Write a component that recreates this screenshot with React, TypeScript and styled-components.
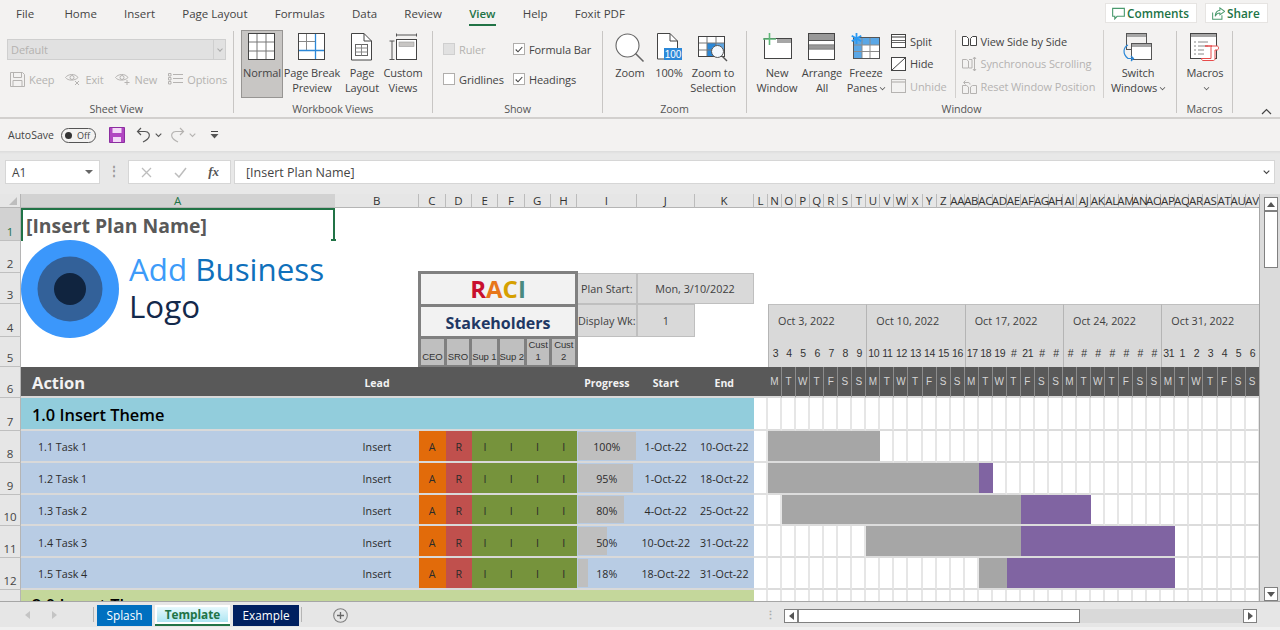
import React from 'react';
import styled, { createGlobalStyle, css } from 'styled-components';

const UI = '"Open Sans", "Noto Sans", "Liberation Sans", sans-serif';

const GlobalStyle = createGlobalStyle`
  html, body {
    margin: 0;
    padding: 0;
    overflow: hidden;
    background: #f3f2f1;
  }
  * {
    box-sizing: border-box;
  }
`;

/* ---------- window + ribbon ---------- */

const Excel = styled.div`
  width: 1280px;
  height: 630px;
  overflow: hidden;
  display: flex;
  flex-direction: column;
  background: #f3f2f1;
  font-family: ${UI};
  font-size: 11.5px;
  color: #444;
`;

const TabStrip = styled.div`
  height: 28px;
  display: flex;
  align-items: center;
  padding: 0 12px 2px 16px;
  gap: 27.2px;
`;

const TabLabel = styled.div<{ $active?: boolean }>`
  position: relative;
  font-size: 11.5px;
  color: ${(p) => (p.$active ? '#217346' : '#444')};
  font-weight: ${(p) => (p.$active ? 600 : 400)};
  &:first-child {
    margin-right: 3px;
  }
  ${(p) =>
    p.$active &&
    css`
      &::after {
        content: '';
        position: absolute;
        left: 0;
        right: 0;
        bottom: -5px;
        height: 2px;
        background: #217346;
      }
    `}
`;

const TabActions = styled.div`
  margin-left: auto;
  display: flex;
  gap: 8px;
`;

const ActionButton = styled.div<{ $w: number }>`
  width: ${(p) => p.$w}px;
  height: 20px;
  background: #fff;
  border: 1px solid #e6e4e2;
  display: flex;
  align-items: center;
  gap: 2px;
  padding-left: 6px;
  color: #217346;
  font-size: 11.8px;
  font-weight: 600;
`;

const Ribbon = styled.div`
  height: 91px;
  display: flex;
  border-bottom: 2px solid #d2d0ce;
  font-size: 11px;
  letter-spacing: -0.1px;
`;

const Group = styled.div<{ $w: number }>`
  width: ${(p) => p.$w}px;
  height: 82px;
  margin-top: 3px;
  flex: none;
  display: flex;
  flex-direction: column;
  border-right: 1px solid #c8c6c4;
`;

const GroupBody = styled.div<{ $pad?: number }>`
  flex: 1;
  display: flex;
  align-items: flex-start;
  margin-top: -1px;
  padding-left: ${(p) => p.$pad ?? 0}px;
  min-height: 0;
`;

const GroupLabel = styled.div`
  height: 16px;
  margin-bottom: -4px;
  line-height: 16px;
  text-align: center;
  font-size: 10.7px;
  color: #555;
`;

const LargeButton = styled.div<{ $w: number; $pressed?: boolean }>`
  width: ${(p) => p.$w}px;
  height: 68px;
  flex: none;
  display: flex;
  flex-direction: column;
  align-items: center;
  padding-top: 3px;
  color: #444;
  ${(p) =>
    p.$pressed &&
    css`
      background: #c8c6c4;
      border: 1px solid #979593;
      padding-top: 2px;
    `}
`;

const ButtonLabel = styled.div`
  line-height: 15px;
  text-align: center;
  white-space: nowrap;
`;

const IconSlot = styled.div`
  height: 32px;
  display: flex;
  align-items: flex-start;
  justify-content: center;
  flex: none;
`;

const Caret = styled.span`
  display: inline-block;
  width: 5px;
  height: 5px;
  margin-left: 3px;
  border-right: 1px solid #555;
  border-bottom: 1px solid #555;
  transform: translateY(-2px) rotate(45deg) scale(0.8);
`;

const MiniColumn = styled.div<{ $w: number; $divider?: boolean }>`
  width: ${(p) => p.$w}px;
  flex: none;
  height: 68px;
  padding-left: 6px;
  display: flex;
  flex-direction: column;
  ${(p) => p.$divider && 'border-right: 1px solid #d2d0ce;'}
`;

const MiniRow = styled.div<{ $disabled?: boolean }>`
  height: 22.5px;
  display: flex;
  align-items: center;
  gap: 4px;
  white-space: nowrap;
  color: ${(p) => (p.$disabled ? '#b5b3b1' : '#444')};
`;

const SheetViewBody = styled.div`
  padding: 9px 0 0 7px;
`;

const StyleCombo = styled.div`
  width: 219px;
  height: 21px;
  display: flex;
  justify-content: space-between;
  align-items: center;
  background: #e1e1e1;
  border: 1px solid #cfcfcf;
  padding-left: 3px;
  color: #b4b2b0;
`;

const ComboArrow = styled.div`
  width: 12px;
  height: 100%;
  border-left: 1px solid #cfcfcf;
  display: flex;
  align-items: center;
  justify-content: center;
`;

const DimCaret = styled.span`
  width: 4px;
  height: 4px;
  border-right: 1px solid #aaa;
  border-bottom: 1px solid #aaa;
  transform: translateY(-1px) rotate(45deg);
`;

const SheetViewRow = styled.div`
  display: flex;
  gap: 11px;
  margin-top: 9px;
  padding-left: 3px;
`;

const DimItem = styled.div`
  display: flex;
  align-items: center;
  gap: 4px;
  height: 20px;
  color: #b4b2b0;
`;

const ShowGrid = styled.div`
  display: grid;
  grid-template-columns: 70px 90px;
  grid-auto-rows: 30px;
  padding: 4px 0 0 10px;
`;

const ShowItem = styled.div<{ $disabled?: boolean }>`
  display: flex;
  align-items: center;
  gap: 4px;
  color: ${(p) => (p.$disabled ? '#b4b2b0' : '#444')};
`;

const CheckBox = styled.div<{ $disabled?: boolean }>`
  width: 12px;
  height: 12px;
  flex: none;
  display: flex;
  align-items: center;
  justify-content: center;
  border: 1px solid ${(p) => (p.$disabled ? '#cfcfcf' : '#b0aeac')};
  background: ${(p) => (p.$disabled ? '#e1e1e1' : '#fff')};
`;

const Collapse = styled.div`
  margin-left: auto;
  margin-right: 8px;
  align-self: flex-end;
  margin-bottom: 2px;
`;

/* ---------- quick access + formula bar ---------- */

const QuickBar = styled.div`
  height: 32px;
  flex: none;
  display: flex;
  align-items: center;
  padding-left: 8px;
  font-size: 10.5px;
`;

const OffToggle = styled.div`
  width: 35px;
  height: 15px;
  margin-left: 7px;
  border: 1.5px solid #555;
  border-radius: 8px;
  display: flex;
  align-items: center;
  gap: 5px;
  padding-left: 3px;
  font-size: 9px;
  color: #444;
`;

const ToggleKnob = styled.div`
  width: 7px;
  height: 7px;
  border-radius: 50%;
  background: #333;
`;

const QuickIcon = styled.div<{ $left: number }>`
  margin-left: ${(p) => p.$left}px;
  display: flex;
`;

const FormulaBar = styled.div`
  height: 43px;
  flex: none;
  display: flex;
  gap: 3px;
  padding: 9px 5px 0;
  background: linear-gradient(#dcdcdc 0, #e8e8e8 3px, #e8e8e8 100%);
`;

const BarBox = styled.div<{ $w?: number }>`
  height: 24px;
  ${(p) => (p.$w ? `width: ${p.$w}px; flex: none;` : 'flex: 1;')}
  background: #fff;
  border: 1px solid #d6d6d6;
  display: flex;
  align-items: center;
  font-size: 12px;
  color: #444;
`;

const NameBox = styled(BarBox)`
  padding: 0 6px;
  justify-content: space-between;
`;

const Arrow = styled.div`
  width: 0;
  height: 0;
  border-left: 4px solid transparent;
  border-right: 4px solid transparent;
  border-top: 4px solid #666;
`;

const BarDots = styled.div`
  width: 22px;
  flex: none;
  color: #999;
  text-align: center;
  line-height: 22px;
  font-size: 12px;
  font-weight: 700;
`;

const FxBox = styled(BarBox)`
  justify-content: space-between;
  padding: 0 11px 0 12px;
`;

const FxMark = styled.span`
  font-family: 'Liberation Serif', serif;
  font-style: italic;
  font-weight: 700;
  font-size: 13px;
  color: #555;
`;

const FormulaInput = styled(BarBox)`
  padding: 0 4px 0 11px;
  justify-content: space-between;
  font-size: 12.5px;
`;

/* ---------- sheet ---------- */

const SheetArea = styled.div`
  height: 408px;
  flex: none;
  display: flex;
  background: #dbdbdb;
  border-bottom: 1px solid #a6a6a6;
`;

const COLUMNS = [21, 314, 84, 26.5, 26.5, 26, 26.5, 26, 26.5, 59.5, 58.5, 58.5, 14.5, ...Array(35).fill(14.057)];
const ROWS = [14, 33, 31.6, 31.4, 32.7, 30, 31.6, 32.4, 32, 32, 31.5, 31.7, 32.3, 27];

const SheetGrid = styled.div`
  width: 1260px;
  height: 100%;
  flex: none;
  overflow: hidden;
  display: grid;
  grid-template-columns: ${COLUMNS.map((w) => `${w}px`).join(' ')};
  grid-template-rows: ${ROWS.map((h) => `${h}px`).join(' ')};
  background: #fff;
  border-right: 1px solid #a6a6a6;
`;

type Place = { $col: number; $row: number; $cols?: number; $rows?: number };

const place = css<Place>`
  grid-column: ${(p) => p.$col} / span ${(p) => p.$cols ?? 1};
  grid-row: ${(p) => p.$row} / span ${(p) => p.$rows ?? 1};
`;

const Corner = styled.div`
  grid-column: 1;
  grid-row: 1;
  background: #e6e6e6;
  border-right: 1px solid #b5b5b5;
  border-bottom: 1px solid #b5b5b5;
  position: relative;
  &::after {
    content: '';
    position: absolute;
    right: 3px;
    bottom: 2px;
    border-left: 8px solid transparent;
    border-bottom: 8px solid #bdbdbd;
  }
`;

const ColHead = styled.div<Place & { $selected?: boolean }>`
  ${place}
  display: flex;
  align-items: center;
  justify-content: center;
  white-space: nowrap;
  background: ${(p) => (p.$selected ? '#d2d2d2' : '#e6e6e6')};
  border-bottom: 1px solid #b5b5b5;
  border-right: 1px solid ${(p) => (p.$selected ? '#d2d2d2' : '#bcbcbc')};
  color: ${(p) => (p.$selected ? '#217346' : '#333')};
  font-size: 11.5px;
  letter-spacing: -0.3px;
  font-weight: 500;
  line-height: 13px;
`;

const RowHead = styled.div<Place & { $selected?: boolean }>`
  ${place}
  display: flex;
  align-items: flex-end;
  justify-content: center;
  padding-bottom: 1px;
  background: ${(p) => (p.$selected ? '#d2d2d2' : '#e6e6e6')};
  border-right: 1px solid #b5b5b5;
  border-bottom: 1px solid #bfbfbf;
  color: ${(p) => (p.$selected ? '#217346' : '#444')};
  font-size: 11.5px;
  line-height: 14px;
`;

const SelectedCell = styled.div<Place>`
  ${place}
  position: relative;
  border: 2px solid #217346;
  border-bottom: 0;
  display: flex;
  align-items: center;
  padding-left: 3px;
  font-size: 19.4px;
  font-weight: 700;
  color: #595959;
  white-space: nowrap;
  &::after {
    content: '';
    position: absolute;
    right: -3px;
    bottom: 0;
    width: 5px;
    height: 2px;
    background: #217346;
  }
`;

const LogoCell = styled.div<Place>`
  ${place}
  display: flex;
  align-items: flex-start;
  gap: 10px;
  margin-top: -1px;
  z-index: 1;
  white-space: nowrap;
`;

const LogoText = styled.div`
  margin-top: 11px;
  font-size: 31.3px;
  line-height: 37px;
  color: #13294b;
`;

const LogoAdd = styled.span`
  color: #3d9bf9;
`;

const LogoBusiness = styled.span`
  color: #0f70bb;
`;

const RaciBlock = styled.div<Place>`
  ${place}
  margin: -2px -1px 0 -1px;
  display: grid;
  grid-template-rows: 30px 29px 1fr;
  gap: 3px;
  background: #808080;
  border: 3px solid #808080;
  z-index: 1;
`;

const RaciTitle = styled.div`
  background: #f2f2f2;
  display: flex;
  align-items: center;
  justify-content: center;
  font-size: 24px;
  font-weight: 700;
`;

const RaciLetter = styled.span<{ $c: string }>`
  color: ${(p) => p.$c};
`;

const Stakeholders = styled.div`
  background: #f2f2f2;
  display: flex;
  align-items: flex-end;
  justify-content: center;
  font-size: 16px;
  font-weight: 700;
  line-height: 25px;
  color: #1f3864;
`;

const RoleRow = styled.div`
  display: grid;
  grid-template-columns: repeat(6, 1fr);
  gap: 3px;
`;

const RoleCell = styled.div`
  background: #bfbfbf;
  display: flex;
  align-items: flex-end;
  justify-content: center;
  text-align: center;
  padding-bottom: 2px;
  font-family: 'Liberation Sans', sans-serif;
  font-size: 9.5px;
  line-height: 12px;
  color: #333;
  white-space: pre;
  letter-spacing: -0.1px;
`;

const InfoCell = styled.div<Place>`
  ${place}
  background: #d9d9d9;
  border: 1px solid #bfbfbf;
  display: flex;
  align-items: center;
  justify-content: center;
  white-space: nowrap;
  font-size: 10.8px;
  color: #404040;
`;

const WeekCell = styled.div<Place>`
  ${place}
  background: #d9d9d9;
  border-top: 1px solid #bfbfbf;
  border-left: 1px solid #b5b5b5;
  display: flex;
  align-items: center;
  padding-left: 9px;
  white-space: nowrap;
  font-size: 10.8px;
  color: #404040;
`;

const DayCell = styled.div<Place & { $first?: boolean }>`
  ${place}
  background: #d9d9d9;
  ${(p) => p.$first && 'border-left: 1px solid #b5b5b5;'}
  display: flex;
  align-items: center;
  justify-content: center;
  padding-top: 3px;
  font-family: 'Liberation Sans', sans-serif;
  font-size: 10.5px;
  letter-spacing: -0.3px;
  color: #333;
`;

const HeadCell = styled.div<Place & { $left?: boolean; $big?: boolean }>`
  ${place}
  background: #595959;
  color: #f2f2f2;
  display: flex;
  align-items: center;
  justify-content: ${(p) => (p.$left ? 'flex-start' : 'center')};
  padding: 3px 0 0 ${(p) => (p.$left ? 11 : 0)}px;
  font-size: ${(p) => (p.$big ? 16.5 : 10.5)}px;
  font-weight: 700;
  border-bottom: 2px solid #d9d9d9;
`;

const WeekdayCell = styled.div<Place>`
  ${place}
  background: #595959;
  color: #d5d5d5;
  display: flex;
  align-items: center;
  justify-content: center;
  font-family: 'Liberation Sans', sans-serif;
  font-size: 10px;
  border-right: 1px solid #8c8c8c;
  border-bottom: 2px solid #d9d9d9;
`;

const ThemeCell = styled.div<Place & { $bg: string }>`
  ${place}
  background: ${(p) => p.$bg};
  display: flex;
  align-items: center;
  padding: 3px 0 0 11px;
  font-size: 16.4px;
  font-weight: 600;
  color: #000;
  white-space: nowrap;
  border-bottom: 2px solid #d9d9d9;
`;

const TaskCell = styled.div<Place & { $bg?: string; $left?: boolean }>`
  ${place}
  position: relative;
  background: ${(p) => p.$bg ?? '#b8cce4'};
  display: flex;
  align-items: center;
  justify-content: ${(p) => (p.$left ? 'flex-start' : 'center')};
  padding: 3px 0 0 ${(p) => (p.$left ? 17 : 0)}px;
  font-size: 10.7px;
  color: #2b2b2b;
  white-space: nowrap;
  border-bottom: 2px solid #d9d9d9;
`;

const ProgressBar = styled.div<{ $pct: number }>`
  position: absolute;
  left: 1px;
  top: 1px;
  bottom: 1px;
  width: ${(p) => p.$pct * 0.97}%;
  background: #bfbfbf;
`;

const ProgressValue = styled.span`
  position: relative;
`;

const GapCell = styled.div<Place>`
  ${place}
  border-bottom: 2px solid #e0e0e0;
  border-right: 2px solid #e6e6e6;
`;

const GanttCell = styled.div<Place & { $fill?: 'done' | 'left' }>`
  ${place}
  border-bottom: 2px solid #dcdcdc;
  ${(p) =>
    p.$fill === 'done'
      ? 'background: #a6a6a6;'
      : p.$fill === 'left'
      ? 'background: #8064a2;'
      : 'border-right: 2px solid #e6e6e6;'}
`;

const VScroll = styled.div`
  flex: 1;
  display: flex;
  flex-direction: column;
  align-items: center;
  padding: 3px 0 0 2px;
`;

const ScrollButton = styled.div`
  width: 14px;
  height: 14px;
  flex: none;
  background: #fff;
  border: 1px solid #808080;
  display: flex;
  align-items: center;
  justify-content: center;
`;

const VThumb = styled.div`
  width: 14px;
  height: 57px;
  background: #fff;
  border: 1px solid #808080;
  margin-bottom: auto;
`;

/* ---------- bottom bar ---------- */

const BottomBar = styled.div`
  height: 25px;
  flex: none;
  display: flex;
  align-items: flex-start;
  background: #e6e6e6;
`;

const SheetNav = styled.div`
  width: 94px;
  height: 15px;
  margin-top: 5px;
  flex: none;
  display: flex;
  align-items: center;
  gap: 22px;
  padding-left: 25px;
  border-right: 1px solid #b5b5b5;
`;

const SheetTab = styled.div<{ $w: number; $bg: string; $current?: boolean }>`
  width: ${(p) => p.$w}px;
  height: 21px;
  margin: 3px 0 0 3px;
  padding-bottom: 2px;
  flex: none;
  display: flex;
  align-items: center;
  justify-content: center;
  background: ${(p) => p.$bg};
  color: #fff;
  font-size: 11.8px;
  ${(p) =>
    p.$current &&
    css`
      background: linear-gradient(#eefbfe, #a6e3f1);
      box-shadow: inset 0 0 0 2px #fff;
      border-bottom: 2px solid #217346;
      color: #217346;
      font-weight: 700;
    `}
`;

const TabEnd = styled.div`
  width: 1px;
  height: 15px;
  margin: 5px 0 0 2px;
  background: #b5b5b5;
`;

const AddSheet = styled.div`
  margin: 6px 0 0 31px;
  display: flex;
`;

const BottomDots = styled.div`
  margin: 0 0 0 417px;
  width: 8px;
  line-height: 26px;
  color: #aaa;
  font-size: 11px;
  font-weight: 700;
  text-align: center;
`;

const HScroll = styled.div`
  width: 473px;
  height: 14px;
  margin: 7px 0 0 11px;
  flex: none;
  display: flex;
  background: #d9d9d9;
`;

const HThumb = styled.div`
  width: 282px;
  background: #fff;
  border: 1px solid #808080;
  margin-right: auto;
`;

const StatusEdge = styled.div`
  flex: 1;
  background: #f0f0f0;
`;

/* ---------- icons ---------- */

const I = styled.svg`
  display: block;
  flex: none;
`;

const NormalIcon = () => (
  <I width="28" height="28" viewBox="0 0 28 28" fill="none">
    <rect x=".5" y=".5" width="26" height="26" fill="#fff" stroke="#444" />
    <path d="M9 1v25M18 1v25M1 9h25M1 18h25" stroke="#777" />
  </I>
);

const PageBreakIcon = () => (
  <I width="28" height="28" viewBox="0 0 28 28" fill="none">
    <rect x=".5" y=".5" width="26" height="26" fill="#fff" stroke="#444" />
    <path d="M8.5 1v16M1 8.5h16" stroke="#888" />
    <path d="M17.5 1v25M1 17.5h25" stroke="#2b88d8" strokeWidth="1.3" />
  </I>
);

const PageLayoutIcon = () => (
  <I width="22" height="28" viewBox="0 0 22 28" fill="none">
    <path d="M.5.5H13L20.5 8v19H.5z" fill="#fff" stroke="#444" />
    <path d="M13 .5V8h7.5" stroke="#444" />
    <rect x="4.5" y="11.5" width="12" height="11" stroke="#666" />
    <path d="M4.5 15h12M4.5 19h12M10.5 11.5v11" stroke="#888" />
  </I>
);

const CustomViewsIcon = () => (
  <I width="28" height="28" viewBox="0 0 28 28" fill="none">
    <path d="M7.5.5v3M27.5.5v3M7.5 2h20" stroke="#555" />
    <path d="M.5 8h5M.5 26.5h5M3 8v18.5" stroke="#555" />
    <rect x="7.5" y="6.5" width="20" height="20" fill="#fff" stroke="#444" />
    <rect x="10" y="9" width="15" height="4.5" fill="#c8c6c4" stroke="#999" strokeWidth=".6" />
  </I>
);

const ZoomIcon = () => (
  <I width="30" height="30" viewBox="0 0 30 30" fill="none">
    <circle cx="12.5" cy="12.5" r="11.5" fill="#fff" stroke="#666" strokeWidth="1.1" />
    <path d="M20.5 20.5l8 8" stroke="#666" strokeWidth="1.6" />
  </I>
);

const HundredIcon = () => (
  <I width="28" height="28" viewBox="0 0 28 28" fill="none">
    <path d="M2.5.5H15L22.5 8v18H2.5z" fill="#fff" stroke="#444" />
    <path d="M15 .5V8h7.5" stroke="#444" />
    <rect x="9" y="15" width="18" height="12" fill="#2b88d8" />
    <text x="18" y="25" textAnchor="middle" fontSize="10" fill="#fff" fontFamily="Liberation Sans, sans-serif">
      100
    </text>
  </I>
);

const ZoomSelectionIcon = () => (
  <I width="30" height="30" viewBox="0 0 30 30" fill="none">
    <rect x=".5" y="3.5" width="26" height="20" fill="#fff" stroke="#444" />
    <rect x="9" y="10" width="9" height="13" fill="#2b88d8" />
    <rect x="18" y="10" width="8" height="7" fill="#2b88d8" opacity=".75" />
    <path d="M1 10h25M1 17h25M9 4v19M18 4v19" stroke="#777" />
    <circle cx="19.5" cy="18.5" r="6" fill="#f3f8fd" stroke="#555" />
    <path d="M24 23l5 5" stroke="#555" strokeWidth="1.4" />
  </I>
);

const NewWindowIcon = () => (
  <I width="30" height="28" viewBox="0 0 30 28" fill="none">
    <rect x="2.5" y="5.5" width="27" height="20" fill="#fff" stroke="#444" />
    <rect x="15" y="6" width="14" height="4" fill="#a6a6a6" />
    <path d="M7.5 0v12M1 6h13" stroke="#5fb878" strokeWidth="1.6" />
  </I>
);

const ArrangeIcon = () => (
  <I width="28" height="28" viewBox="0 0 28 28" fill="none">
    <rect x=".5" y=".5" width="26" height="26" fill="#fff" stroke="#444" />
    <path d="M1 4h25" stroke="#999" strokeWidth="6" />
    <path d="M1 14h25" stroke="#999" strokeWidth="3" />
    <path d="M1 12h25M1 16h25M1 7.5h25" stroke="#555" />
  </I>
);

const FreezeIcon = () => (
  <I width="30" height="28" viewBox="0 0 30 28" fill="none">
    <rect x="2.5" y="4.5" width="26" height="21" fill="#fff" stroke="#555" />
    <rect x="3" y="5" width="25" height="7" fill="#5aa7e6" />
    <rect x="3" y="12" width="8" height="13" fill="#5aa7e6" />
    <path d="M11 5v20M19 5v20M3 12h25M3 18.5h25" stroke="#8b8b8b" />
    <path d="M5.5 0v11M.7 2.8l9.6 5.4M.7 8.2l9.6-5.4" stroke="#2b9af3" strokeWidth="1.8" />
  </I>
);

const SwitchIcon = () => (
  <I width="30" height="30" viewBox="0 0 30 30" fill="none">
    <rect x="3.5" y=".5" width="20" height="16" fill="#f3f2f1" stroke="#555" />
    <rect x="4" y="1" width="19" height="3" fill="#a6a6a6" />
    <rect x="8.5" y="10.5" width="20" height="16" fill="#fff" stroke="#555" />
    <rect x="9" y="11" width="19" height="3" fill="#a6a6a6" />
    <path d="M5 12C.5 14-1 21 5 25.5h5M8 23l2.500 2.500L8 28" stroke="#2b88d8" strokeWidth="1.2" />
  </I>
);

const MacrosIcon = () => (
  <I width="30" height="30" viewBox="0 0 30 30" fill="none">
    <rect x=".5" y=".5" width="26" height="25" fill="#fff" stroke="#444" />
    <rect x="1" y="1" width="25" height="3" fill="#a6a6a6" />
    <path d="M4 9h2M8 9h10M4 13h2M8 13h10M4 17h2M8 17h6M4 21h2M8 21h6" stroke="#888" />
    <path d="M15 13h12c1 0 1.500 1 1.500 2s-.5 2-1.500 2h-2v9c0 1-1 1.500-2 1.500H13c-1 0-1.500-1-1.500-2H21V14.500c0-1 .5-1.500 1-1.500z" fill="#fff" stroke="#e74b4b" />
  </I>
);

const SplitIcon = () => (
  <I width="15" height="14" viewBox="0 0 15 14" fill="none">
    <rect x=".5" y=".5" width="14" height="13" fill="#fff" stroke="#444" />
    <path d="M1 3h13" stroke="#999" strokeWidth="2" />
    <path d="M1 6.5h13M1 8.5h13" stroke="#666" />
  </I>
);

const HideIcon = () => (
  <I width="15" height="14" viewBox="0 0 15 14" fill="none">
    <rect x=".5" y=".5" width="14" height="13" fill="#fff" stroke="#444" />
    <path d="M1 13L14 1" stroke="#444" />
  </I>
);

const UnhideIcon = () => (
  <I width="15" height="14" viewBox="0 0 15 14" fill="none">
    <rect x=".5" y=".5" width="14" height="13" fill="#f3f2f1" stroke="#b5b3b1" />
    <path d="M1 3h13" stroke="#cfcdcb" strokeWidth="2" />
  </I>
);

const SideBySideIcon = () => (
  <I width="15" height="12" viewBox="0 0 15 12" fill="none">
    <path d="M.5 1.5h4l2 2v7h-6zM8.500 3.500l2-2h4v9h-6z" fill="#fff" stroke="#444" />
  </I>
);

const SyncIcon = () => (
  <I width="15" height="16" viewBox="0 0 15 16" fill="none" stroke="#b5b3b1">
    <path d="M.5 3.5h4l2 1.500v7h-6zM7 3.500h3V12H7" fill="#f3f2f1" />
    <path d="M12.500 1v14M11 3l1.500-2L14 3M11 13l1.500 2 1.500-2" />
  </I>
);

const ResetIcon = () => (
  <I width="15" height="15" viewBox="0 0 15 15" fill="none" stroke="#b5b3b1">
    <path d="M.5 6.500h4l2 1.500v6.500h-6zM8.500 8l2-1.500h4v8h-6z" fill="#f3f2f1" />
    <path d="M6 3.500H2M3.500 1.500l-2 2 2 2M6 3.500c1.500 0 2 1 2 2" />
  </I>
);

const KeepIcon = () => (
  <I width="15" height="15" viewBox="0 0 15 15" fill="none" stroke="#b5b3b1">
    <path d="M.5.5h12l2 2v12H.5z" />
    <path d="M3.500 1v4.500h8V1M3 14.500v-6h9v6" />
  </I>
);

const EyeXIcon = () => (
  <I width="16" height="14" viewBox="0 0 16 14" fill="none" stroke="#b5b3b1">
    <path d="M.5 5.500C3 2 10 1 13 5.500 10 9 3 9 .5 5.500z" />
    <circle cx="7" cy="5.500" r="2" />
    <path d="M10 9l4 4M14 9l-4 4" />
  </I>
);

const EyePlusIcon = () => (
  <I width="16" height="14" viewBox="0 0 16 14" fill="none" stroke="#b5b3b1">
    <path d="M.5 5.500C3 2 10 1 13 5.500 10 9 3 9 .5 5.500z" />
    <circle cx="7" cy="5.500" r="2" />
    <path d="M12 8v5M9.500 10.500h5" />
  </I>
);

const OptionsIcon = () => (
  <I width="15" height="12" viewBox="0 0 15 12" fill="none" stroke="#b5b3b1">
    <path d="M.5.5H3V3H.5zM.5 4.500H3V7H.5zM.5 8.500H3V11H.5zM5 1.500h10M5 5.500h10M5 9.500h10" />
  </I>
);

const CheckMark = () => (
  <I width="8" height="7" viewBox="0 0 8 7" fill="none">
    <path d="M.7 3.500L3 5.800 7.300 1" stroke="#444" strokeWidth="1.1" />
  </I>
);

const CommentIcon = () => (
  <I width="13" height="13" viewBox="0 0 14 14" fill="none">
    <path d="M.7 1.500h12.600V10H5.500L3 12.800V10H.7z" stroke="#4a9a6e" strokeWidth="1.2" />
  </I>
);

const ShareIcon = () => (
  <I width="13" height="13" viewBox="0 0 14 14" fill="none">
    <path d="M.7 6v7.300h10V9" stroke="#4a9a6e" strokeWidth="1.1" />
    <path d="M8.500 1l5 3.700-5 3.700V6.500C6 6.500 4.500 7.500 3.500 10c0-4 2-6 5-6.500z" stroke="#4a9a6e" strokeWidth="1.1" />
  </I>
);

const SaveIcon = () => (
  <I width="16" height="16" viewBox="0 0 16 16" fill="none">
    <path d="M.5.5h15v15H.5z" fill="#b146c2" stroke="#8c2ea0" />
    <rect x="3.500" y="1" width="9" height="5" fill="#f3d9f7" />
    <rect x="4" y="10" width="8" height="5" fill="#f3d9f7" />
  </I>
);

const UndoIcon = () => (
  <I width="15" height="16" viewBox="0 0 15 16" fill="none">
    <path d="M5 1L1.500 4.500 5 8M2 4.500h7c4 0 5 3.500 4 5.500-1 2.500-4 4-6 5" stroke="#555" strokeWidth="1.2" />
  </I>
);

const RedoIcon = () => (
  <I width="15" height="16" viewBox="0 0 15 16" fill="none">
    <path d="M10 1l3.500 3.500L10 8M13 4.500H6c-4 0-5 3.500-4 5.500 1 2.500 4 4 6 5" stroke="#b5b3b1" strokeWidth="1.2" />
  </I>
);

const TinyCaret = ({ color = '#555' }: { color?: string }) => (
  <I width="7" height="5" viewBox="0 0 7 5" fill="none">
    <path d="M.7.7l2.800 2.800L6.300.7" stroke={color} strokeWidth="1.1" />
  </I>
);

const CustomizeIcon = () => (
  <I width="9" height="8" viewBox="0 0 9 8" fill="none">
    <path d="M1 .5h7" stroke="#444" />
    <path d="M.5 3h8l-4 4.500z" fill="#555" />
  </I>
);

const XIcon = () => (
  <I width="11" height="11" viewBox="0 0 11 11" fill="none">
    <path d="M1 1l9 9M10 1l-9 9" stroke="#bdbdbd" strokeWidth="1.3" />
  </I>
);

const TickIcon = () => (
  <I width="13" height="11" viewBox="0 0 13 11" fill="none">
    <path d="M1 6l4 4 7-9" stroke="#bdbdbd" strokeWidth="1.5" />
  </I>
);

const LogoMark = () => (
  <I width="98" height="98" viewBox="0 0 98 98">
    <circle cx="49" cy="49" r="49" fill="#3b97fb" />
    <circle cx="49" cy="49" r="32.5" fill="#336199" />
    <circle cx="49" cy="49" r="16" fill="#10243f" />
  </I>
);

const Tri = ({ dir, color = '#555' }: { dir: 'up' | 'down' | 'left' | 'right'; color?: string }) => {
  const points = { up: '0,5 8,5 4,0', down: '0,0 8,0 4,5', left: '5,0 5,8 0,4', right: '0,0 0,8 5,4' }[dir];
  const wide = dir === 'up' || dir === 'down';
  return (
    <I width={wide ? 8 : 5} height={wide ? 5 : 8} viewBox={wide ? '0 0 8 5' : '0 0 5 8'}>
      <polygon points={points} fill={color} />
    </I>
  );
};

const PlusCircle = () => (
  <I width="15" height="15" viewBox="0 0 15 15" fill="none">
    <circle cx="7.5" cy="7.5" r="6.800" stroke="#808080" strokeWidth="1.1" />
    <path d="M7.5 4v7M4 7.5h7" stroke="#666" strokeWidth="1.3" />
  </I>
);

/* ---------- data ---------- */

const GANTT_COLS = ['N','O','P','Q','R','S','T','U','V','W','X','Y','Z','AA','AB','AC','AD','AE','AF','AG','AH','AI','AJ','AK','AL','AM','AN','AO','AP','AQ','AR','AS','AT','AU','AV'];
const TABLE_COLS = ['A','B','C','D','E','F','G','H','I','J','K','L'];
const WEEKS = ['Oct 3, 2022', 'Oct 10, 2022', 'Oct 17, 2022', 'Oct 24, 2022', 'Oct 31, 2022'];
const DAYS = ['3','4','5','6','7','8','9','10','11','12','13','14','15','16','17','18','19','#','21','#','#','#','#','#','#','#','#','#','31','1','2','3','4','5','6'];
const WEEKDAYS = ['M','T','W','T','F','S','S'];
const ROLES = ['CEO', 'SRO', 'Sup 1', 'Sup 2', 'Cust\n1', 'Cust\n2'];

const TASKS = [
  { name: '1.1 Task 1', pct: 100, start: '1-Oct-22', end: '10-Oct-22', done: [0, 7], left: null },
  { name: '1.2 Task 1', pct: 95, start: '1-Oct-22', end: '18-Oct-22', done: [0, 14], left: [15, 15] },
  { name: '1.3 Task 2', pct: 80, start: '4-Oct-22', end: '25-Oct-22', done: [1, 17], left: [18, 22] },
  { name: '1.4 Task 3', pct: 50, start: '10-Oct-22', end: '31-Oct-22', done: [7, 17], left: [18, 28] },
  { name: '1.5 Task 4', pct: 18, start: '18-Oct-22', end: '31-Oct-22', done: [15, 16], left: [17, 28] },
];

const GANTT_START = 14;
const inRange = (i: number, r: number[] | null) => !!r && i >= r[0] && i <= r[1];

const GanttRow = ({ row, done, left }: { row: number; done?: number[] | null; left?: number[] | null }) => (
  <>
    <GapCell $col={13} $row={row} />
    {GANTT_COLS.map((c, i) => (
      <GanttCell
        key={c}
        $col={GANTT_START + i}
        $row={row}
        $fill={inRange(i, done ?? null) ? 'done' : inRange(i, left ?? null) ? 'left' : undefined}
      />
    ))}
  </>
);

const Sheet = () => (
  <SheetGrid>
    <Corner />
    {TABLE_COLS.map((c, i) => (
      <ColHead key={c} $col={i + 2} $row={1} $selected={c === 'A'}>
        {c}
      </ColHead>
    ))}
    {GANTT_COLS.map((c, i) => (
      <ColHead key={c} $col={GANTT_START + i} $row={1}>
        {c}
      </ColHead>
    ))}
    {ROWS.slice(1).map((_, i) =>
      i < 12 ? (
        <RowHead key={i} $col={1} $row={i + 2} $selected={i === 0}>
          {i + 1}
        </RowHead>
      ) : (
        <RowHead key={i} $col={1} $row={i + 2} />
      )
    )}

    <SelectedCell $col={2} $row={2}>
      [Insert Plan Name]
    </SelectedCell>
    <LogoCell $col={2} $row={3} $rows={4}>
      <LogoMark />
      <LogoText>
        <LogoAdd>Add </LogoAdd>
        <LogoBusiness>Business</LogoBusiness>
        <br />
        Logo
      </LogoText>
    </LogoCell>

    <RaciBlock $col={4} $cols={6} $row={4} $rows={3}>
      <RaciTitle>
        <RaciLetter $c="#c8102e">R</RaciLetter>
        <RaciLetter $c="#e8761a">A</RaciLetter>
        <RaciLetter $c="#d6a000">C</RaciLetter>
        <RaciLetter $c="#4a8a80">I</RaciLetter>
      </RaciTitle>
      <Stakeholders>Stakeholders</Stakeholders>
      <RoleRow>
        {ROLES.map((r) => (
          <RoleCell key={r}>{r}</RoleCell>
        ))}
      </RoleRow>
    </RaciBlock>

    <InfoCell $col={10} $row={4}>Plan Start:</InfoCell>
    <InfoCell $col={11} $cols={2} $row={4}>Mon, 3/10/2022</InfoCell>
    <InfoCell $col={10} $row={5}>Display Wk:</InfoCell>
    <InfoCell $col={11} $row={5}>1</InfoCell>

    {WEEKS.map((w, i) => (
      <WeekCell key={w} $col={GANTT_START + i * 7} $cols={7} $row={5}>
        {w}
      </WeekCell>
    ))}
    {DAYS.map((d, i) => (
      <DayCell key={i} $col={GANTT_START + i} $row={6} $first={i % 7 === 0}>
        {d}
      </DayCell>
    ))}

    <HeadCell $col={2} $row={7} $left $big>Action</HeadCell>
    <HeadCell $col={3} $row={7}>Lead</HeadCell>
    <HeadCell $col={4} $cols={6} $row={7} />
    <HeadCell $col={10} $row={7}>Progress</HeadCell>
    <HeadCell $col={11} $row={7}>Start</HeadCell>
    <HeadCell $col={12} $row={7}>End</HeadCell>
    <HeadCell $col={13} $row={7} />
    {GANTT_COLS.map((c, i) => (
      <WeekdayCell key={c} $col={GANTT_START + i} $row={7}>
        {WEEKDAYS[i % 7]}
      </WeekdayCell>
    ))}

    <ThemeCell $col={2} $cols={11} $row={8} $bg="#92cddc">1.0 Insert Theme</ThemeCell>
    <GanttRow row={8} />

    {TASKS.map((t, i) => {
      const row = 9 + i;
      return (
        <React.Fragment key={t.name}>
          <TaskCell $col={2} $row={row} $left>{t.name}</TaskCell>
          <TaskCell $col={3} $row={row}>Insert</TaskCell>
          <TaskCell $col={4} $row={row} $bg="#e26b0a">A</TaskCell>
          <TaskCell $col={5} $row={row} $bg="#c0504d">R</TaskCell>
          {[6, 7, 8, 9].map((c) => (
            <TaskCell key={c} $col={c} $row={row} $bg="#76933c">I</TaskCell>
          ))}
          <TaskCell $col={10} $row={row}>
            <ProgressBar $pct={t.pct} />
            <ProgressValue>{t.pct}%</ProgressValue>
          </TaskCell>
          <TaskCell $col={11} $row={row}>{t.start}</TaskCell>
          <TaskCell $col={12} $row={row}>{t.end}</TaskCell>
          <GanttRow row={row} done={t.done} left={t.left} />
        </React.Fragment>
      );
    })}

    <ThemeCell $col={2} $cols={11} $row={14} $bg="#c4d79b">2.0 Insert Theme</ThemeCell>
    <GanttRow row={14} />
  </SheetGrid>
);

export default function App() {
  return (
    <>
      <GlobalStyle />
      <Excel>
        <TabStrip>
          {['File', 'Home', 'Insert', 'Page Layout', 'Formulas', 'Data', 'Review', 'View', 'Help', 'Foxit PDF'].map((t) => (
            <TabLabel key={t} $active={t === 'View'}>
              {t}
            </TabLabel>
          ))}
          <TabActions>
            <ActionButton $w={92}>
              <CommentIcon />
              Comments
            </ActionButton>
            <ActionButton $w={63}>
              <ShareIcon />
              Share
            </ActionButton>
          </TabActions>
        </TabStrip>

        <Ribbon>
          <Group $w={233.5}>
            <GroupBody>
              <SheetViewBody>
                <StyleCombo>
                  Default
                  <ComboArrow>
                    <DimCaret />
                  </ComboArrow>
                </StyleCombo>
                <SheetViewRow>
                  <DimItem><KeepIcon />Keep</DimItem>
                  <DimItem><EyeXIcon />Exit</DimItem>
                  <DimItem><EyePlusIcon />New</DimItem>
                  <DimItem><OptionsIcon />Options</DimItem>
                </SheetViewRow>
              </SheetViewBody>
            </GroupBody>
            <GroupLabel>Sheet View</GroupLabel>
          </Group>

          <Group $w={199.5}>
            <GroupBody $pad={7.5}>
              <LargeButton $w={42} $pressed>
                <IconSlot><NormalIcon /></IconSlot>
                <ButtonLabel>Normal</ButtonLabel>
              </LargeButton>
              <LargeButton $w={58}>
                <IconSlot><PageBreakIcon /></IconSlot>
                <ButtonLabel>Page Break<br />Preview</ButtonLabel>
              </LargeButton>
              <LargeButton $w={42}>
                <IconSlot><PageLayoutIcon /></IconSlot>
                <ButtonLabel>Page<br />Layout</ButtonLabel>
              </LargeButton>
              <LargeButton $w={40}>
                <IconSlot><CustomViewsIcon /></IconSlot>
                <ButtonLabel>Custom<br />Views</ButtonLabel>
              </LargeButton>
            </GroupBody>
            <GroupLabel>Workbook Views</GroupLabel>
          </Group>

          <Group $w={170}>
            <GroupBody>
              <ShowGrid>
                <ShowItem $disabled><CheckBox $disabled />Ruler</ShowItem>
                <ShowItem><CheckBox><CheckMark /></CheckBox>Formula Bar</ShowItem>
                <ShowItem><CheckBox />Gridlines</ShowItem>
                <ShowItem><CheckBox><CheckMark /></CheckBox>Headings</ShowItem>
              </ShowGrid>
            </GroupBody>
            <GroupLabel>Show</GroupLabel>
          </Group>

          <Group $w={144}>
            <GroupBody $pad={8}>
              <LargeButton $w={38}>
                <IconSlot><ZoomIcon /></IconSlot>
                <ButtonLabel>Zoom</ButtonLabel>
              </LargeButton>
              <LargeButton $w={40}>
                <IconSlot><HundredIcon /></IconSlot>
                <ButtonLabel>100%</ButtonLabel>
              </LargeButton>
              <LargeButton $w={48}>
                <IconSlot><ZoomSelectionIcon /></IconSlot>
                <ButtonLabel>Zoom to<br />Selection</ButtonLabel>
              </LargeButton>
            </GroupBody>
            <GroupLabel>Zoom</GroupLabel>
          </Group>

          <Group $w={430}>
            <GroupBody $pad={10}>
              <LargeButton $w={40}>
                <IconSlot><NewWindowIcon /></IconSlot>
                <ButtonLabel>New<br />Window</ButtonLabel>
              </LargeButton>
              <LargeButton $w={50}>
                <IconSlot><ArrangeIcon /></IconSlot>
                <ButtonLabel>Arrange<br />All</ButtonLabel>
              </LargeButton>
              <LargeButton $w={38}>
                <IconSlot><FreezeIcon /></IconSlot>
                <ButtonLabel>Freeze<br />Panes<Caret /></ButtonLabel>
              </LargeButton>
              <MiniColumn $w={70.5} $divider>
                <MiniRow><SplitIcon />Split</MiniRow>
                <MiniRow><HideIcon />Hide</MiniRow>
                <MiniRow $disabled><UnhideIcon />Unhide</MiniRow>
              </MiniColumn>
              <MiniColumn $w={148.5} $divider>
                <MiniRow><SideBySideIcon />View Side by Side</MiniRow>
                <MiniRow $disabled><SyncIcon />Synchronous Scrolling</MiniRow>
                <MiniRow $disabled><ResetIcon />Reset Window Position</MiniRow>
              </MiniColumn>
              <LargeButton $w={68}>
                <IconSlot><SwitchIcon /></IconSlot>
                <ButtonLabel>Switch<br />Windows<Caret /></ButtonLabel>
              </LargeButton>
            </GroupBody>
            <GroupLabel>Window</GroupLabel>
          </Group>

          <Group $w={56}>
            <GroupBody>
              <LargeButton $w={56}>
                <IconSlot><MacrosIcon /></IconSlot>
                <ButtonLabel>Macros<br /><Caret /></ButtonLabel>
              </LargeButton>
            </GroupBody>
            <GroupLabel>Macros</GroupLabel>
          </Group>

          <Collapse>
            <I width="11" height="7" viewBox="0 0 11 7" fill="none">
              <path d="M1 6l4.500-4.500L10 6" stroke="#444" strokeWidth="1.2" />
            </I>
          </Collapse>
        </Ribbon>

        <QuickBar>
          AutoSave
          <OffToggle>
            <ToggleKnob />
            Off
          </OffToggle>
          <QuickIcon $left={13}><SaveIcon /></QuickIcon>
          <QuickIcon $left={11}><UndoIcon /></QuickIcon>
          <QuickIcon $left={4}><TinyCaret /></QuickIcon>
          <QuickIcon $left={8}><RedoIcon /></QuickIcon>
          <QuickIcon $left={4}><TinyCaret color="#b5b3b1" /></QuickIcon>
          <QuickIcon $left={14}><CustomizeIcon /></QuickIcon>
        </QuickBar>

        <FormulaBar>
          <NameBox $w={95}>
            A1
            <Arrow />
          </NameBox>
          <BarDots>⋮</BarDots>
          <FxBox $w={103}>
            <XIcon />
            <TickIcon />
            <FxMark>fx</FxMark>
          </FxBox>
          <FormulaInput>
            [Insert Plan Name]
            <TinyCaret color="#444" />
          </FormulaInput>
        </FormulaBar>

        <SheetArea>
          <Sheet />
          <VScroll>
            <ScrollButton><Tri dir="up" /></ScrollButton>
            <VThumb />
            <ScrollButton><Tri dir="down" /></ScrollButton>
          </VScroll>
        </SheetArea>

        <BottomBar>
          <SheetNav>
            <Tri dir="left" color="#c4c4c4" />
            <Tri dir="right" color="#c4c4c4" />
          </SheetNav>
          <SheetTab $w={55} $bg="#0070c0">Splash</SheetTab>
          <SheetTab $w={75} $bg="#fff" $current>Template</SheetTab>
          <SheetTab $w={66} $bg="#002060">Example</SheetTab>
          <TabEnd />
          <AddSheet><PlusCircle /></AddSheet>
          <BottomDots>⋮</BottomDots>
          <HScroll>
            <ScrollButton><Tri dir="left" /></ScrollButton>
            <HThumb />
            <ScrollButton><Tri dir="right" /></ScrollButton>
          </HScroll>
        </BottomBar>
        <StatusEdge />
      </Excel>
    </>
  );
}
